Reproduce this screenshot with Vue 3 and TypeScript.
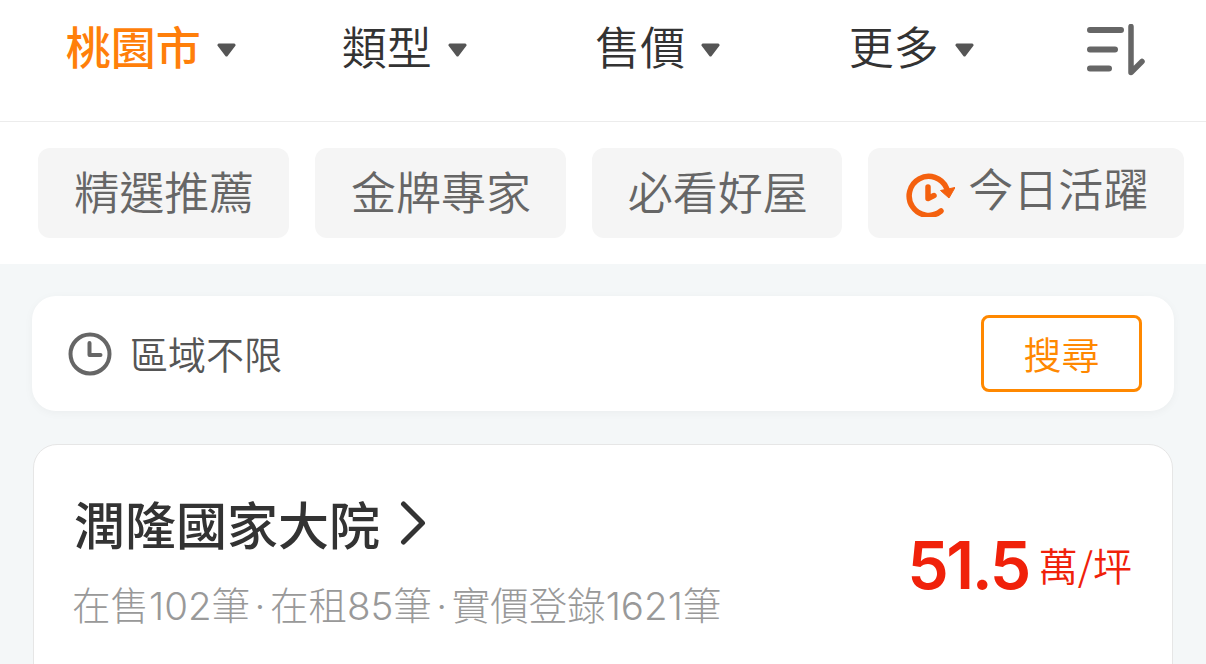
<template>
  <div class="page">
    <header class="filter-bar">
      <div class="filters">
        <div v-for="(f, i) in filters" :key="f" class="filter" :class="{ active: i === 0 }">
          <span class="filter-label">{{ f }}</span>
          <svg class="caret" viewBox="0 0 19 14"><path d="M2 0.5h15a1.6 1.6 0 0 1 1.2 2.6l-7.4 9.6a1.6 1.6 0 0 1-2.6 0L0.8 3.1A1.6 1.6 0 0 1 2 0.5z" /></svg>
        </div>
      </div>
      <svg class="sort-icon" viewBox="0 0 58 52" fill="none" stroke="#666" stroke-linecap="round" stroke-linejoin="round">
        <path d="M3 6h31M3 25.500h25M3 44.500h19" stroke-width="6" />
        <path d="M44 2.500v46l11-11" stroke-width="5.500" />
      </svg>
    </header>

    <nav class="chips">
      <div v-for="c in chips" :key="c" class="chip"><span class="chip-label">{{ c }}</span></div>
      <div class="chip chip-active">
        <svg class="active-icon" viewBox="0 0 50 46" fill="none">
          <path d="M36 40A19.500 19.500 0 1 1 41.500 17" stroke="#f4610f" stroke-width="5.500" stroke-linecap="round" />
          <path d="M35.500 19.500L50 16.500 44 27z" fill="#f4610f" stroke="#f4610f" stroke-width="1" stroke-linejoin="round" />
          <path d="M23 16v11.500l6-3" stroke="#f4610f" stroke-width="5.500" stroke-linecap="round" stroke-linejoin="round" />
        </svg>
        <span class="chip-label">今日活躍</span>
      </div>
    </nav>

    <main class="content">
      <section class="search-card">
        <svg class="clock" viewBox="0 0 44 44" fill="none" stroke="#666" stroke-width="4" stroke-linecap="round" stroke-linejoin="round">
          <circle cx="22" cy="22" r="19.500" />
          <path d="M21.500 11v12h11" />
        </svg>
        <span class="search-text">區域不限</span>
        <button class="search-btn">搜尋</button>
      </section>

      <section class="community-card">
        <div class="community-info">
          <h2 class="community-title">
            潤隆國家大院
            <svg class="chevron" viewBox="0 0 26 44" fill="none" stroke="#333" stroke-width="5" stroke-linecap="round" stroke-linejoin="round"><path d="M3.500 3l19 19-19 19" /></svg>
          </h2>
          <p class="community-stats">在售102筆<span class="dot">·</span>在租85筆<span class="dot">·</span>實價登錄1621筆</p>
        </div>
        <div class="price">
          <span class="price-num">51.5</span>
          <span class="price-unit">萬/坪</span>
        </div>
      </section>
    </main>
  </div>
</template>

<script setup lang="ts">
const filters: string[] = ['桃園市', '類型', '售價', '更多']
const chips: string[] = ['精選推薦', '金牌專家', '必看好屋']
</script>

<style>
html,
body {
  margin: 0;
  overflow: hidden;
  background: #fff;
}
</style>

<style scoped>
.page {
  width: 1206px;
  height: 664px;
  overflow: hidden;
  font-family: "Noto Sans CJK TC", "Liberation Sans", sans-serif;
  background: #f4f7f8;
}

.filter-bar {
  height: 121px;
  display: flex;
  align-items: flex-start;
  padding-left: 24px;
  background: #fff;
  border-bottom: 1px solid #ececec;
}

.filters {
  display: grid;
  grid-template-columns: repeat(4, 253.5px);
  width: 1014px;
  height: 96px;
}

.filter {
  display: flex;
  align-items: center;
  justify-content: center;
  gap: 16px;
  font-size: 45px;
  font-weight: 350;
  color: #333;
}

.filter-label {
  margin-top: -5px;
}

.filter.active {
  color: #ff7f0a;
  font-weight: 500;
}

.caret {
  width: 19px;
  height: 14px;
  margin-top: 4px;
  fill: #555;
}

.sort-icon {
  width: 58px;
  height: 52px;
  margin: 24px 0 0 49px;
}

.chips {
  height: 142px;
  box-sizing: border-box;
  padding: 26px 22px 26px 38px;
  display: flex;
  gap: 26px;
  background: #fff;
}

.chip {
  width: 251px;
  height: 90px;
  border-radius: 12px;
  background: #f5f5f5;
  color: #666;
  font-size: 45px;
  font-weight: 350;
  display: flex;
  align-items: center;
  justify-content: center;
}

.chip-label {
  margin: -6px 0 0 2px;
}

.chip-active {
  width: 316px;
  gap: 11px;
  justify-content: flex-start;
  padding-left: 37px;
  box-sizing: border-box;
}

.chip-active .chip-label {
  margin-top: -12px;
}

.active-icon {
  width: 50px;
  height: 46px;
  margin-top: 2px;
}

.content {
  padding: 32px 32px 0;
}

.search-card {
  height: 115px;
  border-radius: 24px;
  background: #fff;
  box-shadow: 0 2px 10px rgba(0, 0, 0, 0.04);
  display: flex;
  align-items: center;
  padding: 0 32px 0 36px;
}

.clock {
  width: 44px;
  height: 44px;
}

.search-text {
  margin: -2px 0 0 18px;
  font-size: 38px;
  font-weight: 350;
  color: #555;
}

.search-btn {
  margin-left: auto;
  width: 161px;
  height: 77px;
  box-sizing: border-box;
  border: 3px solid #ff8800;
  border-radius: 8px;
  background: #fff;
  color: #ff8800;
  font-family: inherit;
  font-size: 38px;
  font-weight: 350;
  padding: 0 0 2px;
}

.community-card {
  margin: 33px 1px 0;
  height: 260px;
  box-sizing: border-box;
  border: 1px solid #e6e6e6;
  border-radius: 24px;
  background: #fff;
  display: flex;
  justify-content: space-between;
  padding: 43px 40px 0;
}

.community-title {
  margin: 0;
  font-size: 51px;
  line-height: 70px;
  font-weight: 500;
  color: #333;
  display: flex;
  align-items: center;
  gap: 20px;
}

.chevron {
  width: 26px;
  height: 44px;
}

.community-stats {
  margin: 20px 0 0 -2px;
  font-family: "Inter", "Noto Sans CJK TC", sans-serif;
  font-size: 38.500px;
  line-height: 56px;
  font-weight: 300;
  color: #999;
}

.dot {
  margin: 0 4.500px;
}

.price {
  display: flex;
  align-items: center;
  gap: 10px;
  height: 70px;
  margin-top: 42px;
  color: #f0210a;
}

.price-num {
  font-family: "Inter", "Liberation Sans", sans-serif;
  font-size: 66px;
  font-weight: 600;
  letter-spacing: -2.500px;
}

.price-unit {
  font-size: 39px;
  font-weight: 350;
  margin-bottom: 3px;
}
</style>
